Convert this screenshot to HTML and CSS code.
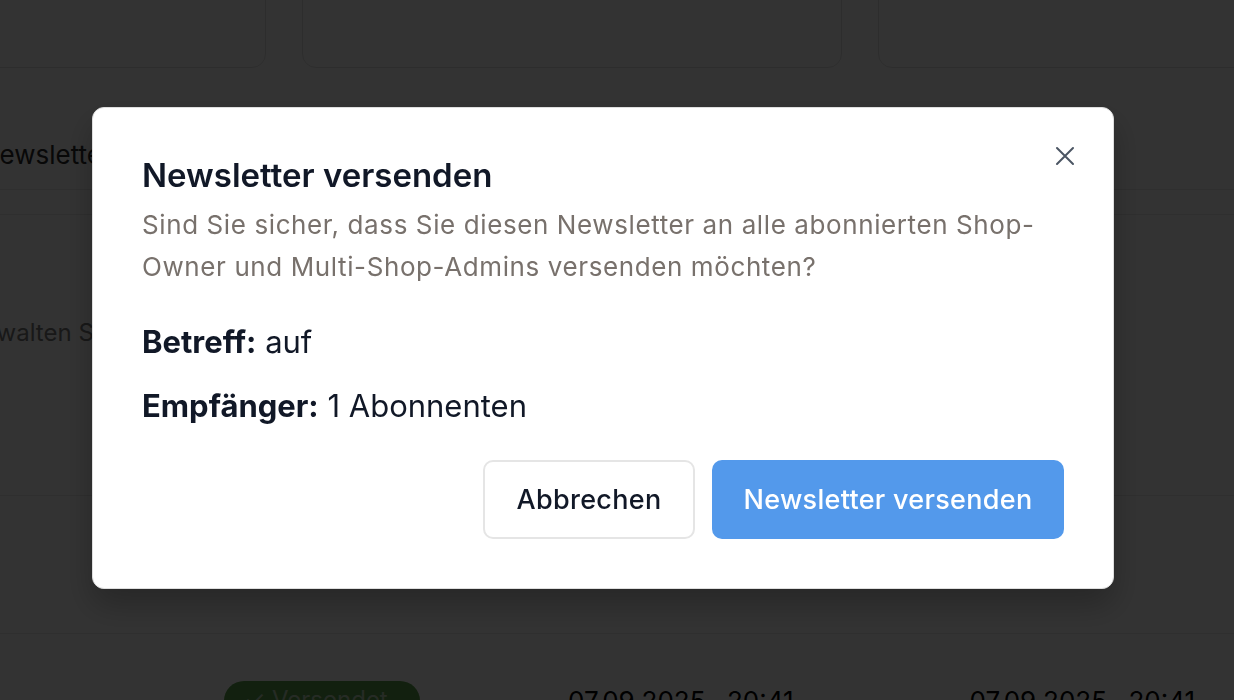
FILE: index.html
```html
<!DOCTYPE html>
<html lang="de">
<head>
<meta charset="utf-8">
<title>Newsletter versenden</title>
<link rel="stylesheet" href="styles.css">
</head>
<body>
<div class="page">
  <div class="stats">
    <div class="stat-card"></div>
    <div class="stat-card"></div>
    <div class="stat-card"></div>
  </div>
  <div class="tabs">
    <div class="tab">Newsletter</div>
  </div>
  <div class="panel">
    <p class="panel-text">Verwalten Sie Ihre Newsletter</p>
  </div>
  <div class="table-head"></div>
  <div class="table-row">
    <span class="badge">✓ Versendet</span>
    <span class="date">07.09.2025,&nbsp; 20:41</span>
    <span class="date">07.09.2025,&nbsp; 20:41</span>
  </div>
</div>

<div class="overlay">
  <div class="modal" role="dialog" aria-labelledby="modal-title">
    <button class="close" aria-label="Schließen">
      <svg width="20" height="20" viewBox="0 0 20 20" fill="none" stroke="currentColor" stroke-width="2" stroke-linecap="round"><path d="M2 2 L18 18 M18 2 L2 18"/></svg>
    </button>
    <h2 id="modal-title" class="modal-title">Newsletter versenden</h2>
    <p class="modal-desc">Sind Sie sicher, dass Sie diesen Newsletter an alle abonnierten Shop-Owner und Multi-Shop-Admins versenden möchten?</p>
    <div class="details">
      <p class="detail"><strong>Betreff:</strong> auf</p>
      <p class="detail"><strong>Empfänger:</strong> 1 Abonnenten</p>
    </div>
    <div class="actions">
      <button class="btn btn-outline">Abbrechen</button>
      <button class="btn btn-primary">Newsletter versenden</button>
    </div>
  </div>
</div>
</body>
</html>
```

FILE: styles.css
```css
* { box-sizing: border-box; }
html, body { margin: 0; padding: 0; }
body {
  width: 1234px;
  height: 700px;
  overflow: hidden;
  font-family: Inter, "Noto Sans", sans-serif;
  background: #ffffff;
  color: #374151;
}

/* underlying page */
.page { height: 700px; overflow: hidden; }
.stats {
  display: flex;
  gap: 36px;
  margin-left: -274px;
  margin-top: -40px;
}
.stat-card {
  flex: 0 0 540px;
  height: 108px;
  border: 1px solid #e2e2e2;
  border-radius: 14px;
  background: #fefefe;
}
.tabs {
  margin-top: 52px;
  height: 70px;
  display: flex;
  align-items: center;
  border-bottom: 1px solid #e8e8e8;
}
.tab {
  margin-left: -40px;
  padding: 0 20px;
  height: 70px;
  display: flex;
  align-items: center;
  font-size: 26px;
  color: #2a2a2a;
}
.panel {
  height: 282px;
  border-top: 1px solid #e8e8e8;
  margin-top: 24px;
  border-bottom: 1px solid #e8e8e8;
  display: flex;
  align-items: center;
}
.panel-text {
  margin: 0 0 45px -42px;
  font-size: 24px;
  color: #7a7a7a;
}
.table-head {
  height: 138px;
  border-bottom: 1px solid #e8e8e8;
}
.table-row {
  display: flex;
  align-items: flex-start;
  padding-top: 47px;
  padding-left: 224px;
}
.badge {
  width: 196px;
  height: 40px;
  border-radius: 20px;
  background: #5aa04b;
  color: #bcd8b8;
  font-size: 24px;
  padding: 4px 20px;
}
.date {
  margin-left: 148px;
  font-size: 26px;
  color: #000;
  padding-top: 4px;
  white-space: nowrap;
}
.date + .date { margin-left: 176px; }

/* overlay + modal */
.overlay {
  position: fixed;
  inset: 0;
  background: rgba(0, 0, 0, 0.8);
  display: flex;
  align-items: flex-start;
  justify-content: flex-start;
  padding: 107px 0 0 92px;
}
.modal {
  position: relative;
  width: 1022px;
  height: 482px;
  background: #ffffff;
  border: 1px solid #dedede;
  border-radius: 12px;
  padding: 44px 49px 49px;
  box-shadow: 0 16px 32px rgba(0, 0, 0, 0.25);
  display: flex;
  flex-direction: column;
}
.close {
  position: absolute;
  top: 38px;
  right: 38px;
  width: 20px;
  height: 20px;
  padding: 0;
  border: 0;
  background: none;
  color: #4b5563;
  display: flex;
}
.modal-title {
  margin: 0;
  font-size: 33px;
  line-height: 46px;
  font-weight: 600;
  color: #111827;
}
.modal-desc {
  margin: 6px 0 0;
  font-size: 26px;
  line-height: 42px;
  letter-spacing: 0.6px;
  color: #78716c;
}
.details {
  margin-top: 33px;
  display: flex;
  flex-direction: column;
  gap: 22px;
}
.detail {
  margin: 0;
  font-size: 31px;
  line-height: 42px;
  color: #111827;
}
.detail strong { font-weight: 700; }
.actions {
  margin-top: auto;
  display: flex;
  justify-content: flex-end;
  gap: 17px;
}
.btn {
  height: 79px;
  border-radius: 10px;
  font-family: Inter, "Noto Sans", sans-serif;
  font-size: 27px;
  letter-spacing: 0.3px;
  font-weight: 500;
  padding: 0 20px;
}
.btn-outline {
  width: 212px;
  background: #ffffff;
  border: 2px solid #e5e5e5;
  color: #111827;
}
.btn-primary {
  width: 352px;
  background: #5399eb;
  border: 0;
  color: #ffffff;
}
```
